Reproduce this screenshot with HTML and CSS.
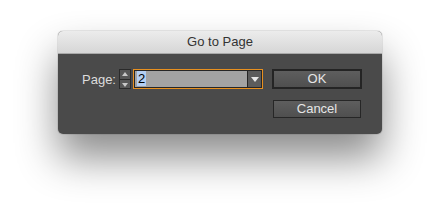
FILE: index.html
```html
<!DOCTYPE html>
<html lang="en">
<head>
    <meta charset="UTF-8">
    <title>Go to Page</title>
    <link rel="stylesheet" href="styles.css">
</head>
<body>
    <div class="dialog">
        <div class="title-bar">Go to Page</div>
        <div class="dialog-body">
            <div class="page-row">
                <label class="page-label" for="page">Page:</label>
                <div class="stepper">
                    <span class="step step-up"></span>
                    <span class="step step-down"></span>
                </div>
                <div class="combo">
                    <div class="combo-input"><span class="selected">2</span></div>
                    <div class="combo-arrow"></div>
                </div>
            </div>
            <div class="actions">
                <button type="button" class="btn btn-default">OK</button>
                <button type="button" class="btn">Cancel</button>
            </div>
        </div>
    </div>
</body>
</html>
```

FILE: styles.css
```css
* {
    margin: 0;
    padding: 0;
    box-sizing: border-box;
}

html, body {
    height: 100%;
}

body {
    background-color: #fff;
    font-family: 'Liberation Sans', Arial, sans-serif;
    padding-top: 31px;
    display: flex;
    justify-content: center;
    align-items: flex-start;
}

.dialog {
    width: 324px;
    border-radius: 5px;
    background-color: #4a4a4a;
    box-shadow: 0 24px 40px rgba(0, 0, 0, 0.45), 0 0 0 1px rgba(0, 0, 0, 0.08);
}

.title-bar {
    height: 23px;
    line-height: 22px;
    text-align: center;
    font-size: 13px;
    color: #333;
    background: linear-gradient(#ececec, #d6d6d6);
    border-bottom: 1px solid #a9a9a9;
    border-radius: 5px 5px 0 0;
}

.dialog-body {
    display: flex;
    justify-content: space-between;
    padding: 15px 20px 16px 24px;
}

.page-row {
    display: flex;
    align-items: center;
    height: 20px;
}

.page-label {
    font-size: 13px;
    color: #dcdcdc;
    margin-right: 3px;
}

.stepper {
    width: 12px;
    height: 20px;
    border: 1px solid #2a2a2a;
    background: #575757;
    display: flex;
    flex-direction: column;
    margin-right: 2px;
}

.step {
    flex: 1;
    position: relative;
}

.step-up {
    border-bottom: 1px solid #2a2a2a;
}

.step::after {
    content: '';
    position: absolute;
    left: 2px;
    border-left: 3px solid transparent;
    border-right: 3px solid transparent;
}

.step-up::after {
    top: 2px;
    border-bottom: 4px solid #c8c8c8;
}

.step-down::after {
    top: 3px;
    border-top: 4px solid #c8c8c8;
}

.combo {
    width: 130px;
    height: 20px;
    border: 1px solid #e8901f;
    display: flex;
}

.combo-input {
    flex: 1;
    background: #a3a3a3;
    border: 1px solid #262626;
    border-right: none;
    font-size: 13px;
    line-height: 16px;
    padding-left: 2px;
}

.selected {
    background: #b3cff3;
    color: #000;
    padding: 0 1px;
}

.combo-arrow {
    width: 15px;
    background: #5c5c5c;
    border: 1px solid #262626;
    position: relative;
}

.combo-arrow::after {
    content: '';
    position: absolute;
    left: 3px;
    top: 6px;
    border-left: 4px solid transparent;
    border-right: 4px solid transparent;
    border-top: 5px solid #e8e8e8;
}

.actions {
    display: flex;
    flex-direction: column;
    align-items: center;
    gap: 11px;
}

.btn {
    width: 88px;
    height: 18px;
    font-family: inherit;
    font-size: 13px;
    color: #e6e6e6;
    background: linear-gradient(#5e5e5e, #4f4f4f);
    border: 1px solid #262626;
    line-height: 16px;
}

.btn-default {
    width: 90px;
    height: 20px;
    border: 2px solid #242424;
}
```
